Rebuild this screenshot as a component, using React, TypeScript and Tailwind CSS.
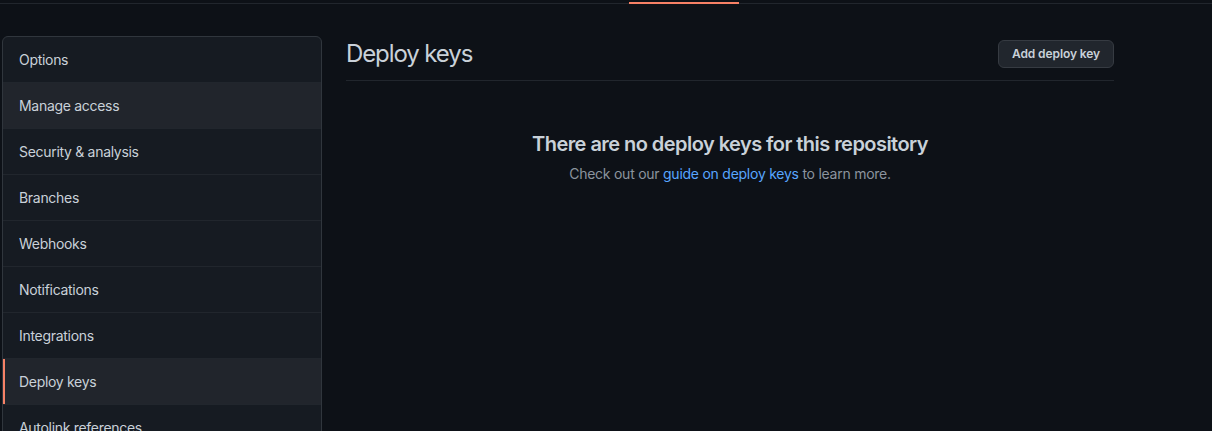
import React from "react";

const items = [
  "Options",
  "Manage access",
  "Security & analysis",
  "Branches",
  "Webhooks",
  "Notifications",
  "Integrations",
  "Deploy keys",
  "Autolink references",
];

export default function App() {
  return (
    <div className="min-h-screen bg-[#0d1117] font-['Inter',sans-serif] text-[#c9d1d9]">
      <div className="relative h-[4px] border-b border-[#21262d]">
        <div className="absolute left-[629px] top-[2px] h-[2px] w-[110px] bg-[#f78166]" />
      </div>
      <div className="mt-[32px] flex pl-[2px]">
        <nav className="w-[320px] shrink-0 self-start overflow-hidden rounded-[6px] border border-[#30363d] bg-[#161b22]">
          {items.map((label, i) => {
            const selected = label === "Deploy keys";
            const hovered = label === "Manage access";
            return (
              <div
                key={label}
                className={
                  "relative px-4 py-3 text-[14px] leading-[21px] tracking-[-0.3px] " +
                  (i > 0 ? "border-t border-[#21262d] " : "") +
                  (selected || hovered ? "bg-[#21252c]" : "")
                }
              >
                {selected && <span className="absolute left-0 top-0 bottom-0 w-[2px] bg-[#f78166]" />}
                {label}
              </div>
            );
          })}
        </nav>
        <main className="ml-[24px] w-[768px] shrink-0">
          <div className="flex items-center justify-between border-b border-[#21262d] pb-2">
            <h2 className="text-[24px] font-normal leading-[36px] tracking-[-1.1px] text-[#c9d1d9]">Deploy keys</h2>
            <button className="h-[28px] rounded-[6px] border border-[#363b42] bg-[#21262d] px-[13px] text-[12px] font-semibold leading-[20px] tracking-[-0.1px] text-[#c9d1d9]">
              Add deploy key
            </button>
          </div>
          <div className="mt-4 px-8 py-8 text-center">
            <h3 className="mb-1 text-[20px] font-semibold leading-[30px] tracking-[-0.55px] text-[#c9d1d9]">
              There are no deploy keys for this repository
            </h3>
            <p className="text-[14px] leading-[21px] tracking-[-0.25px] text-[#8b949e]">
              Check out our <a className="text-[#58a6ff]">guide on deploy keys</a> to learn more.
            </p>
          </div>
        </main>
      </div>
    </div>
  );
}
